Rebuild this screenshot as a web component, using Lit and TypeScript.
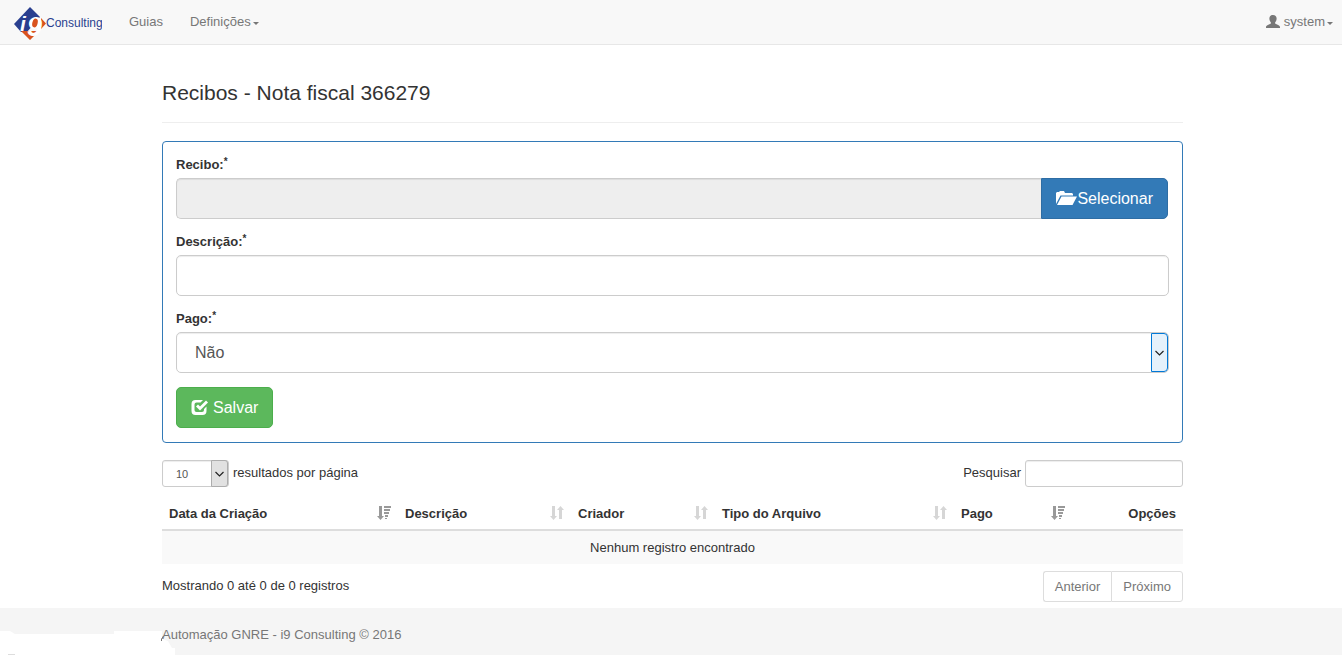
import { LitElement, html, css, svg } from "lit";
import { customElement, state } from "lit/decorators.js";

type SortMode = "none" | "desc" | "off";

interface Column {
  label: string;
  sort: SortMode;
  cls: string;
}

const COLUMNS: Column[] = [
  { label: "Data da Criação", sort: "desc", cls: "c-data" },
  { label: "Descrição", sort: "none", cls: "c-desc" },
  { label: "Criador", sort: "none", cls: "c-criador" },
  { label: "Tipo do Arquivo", sort: "none", cls: "c-tipo" },
  { label: "Pago", sort: "desc", cls: "c-pago" },
  { label: "Opções", sort: "off", cls: "c-opcoes" },
];

const sortIcon = (mode: SortMode) =>
  mode === "desc"
    ? html`<svg class="sort active" viewBox="0 0 14 14" aria-hidden="true">
        ${svg`<path d="M2 0h3v10h2l-3.500 4L0 10h2z M7 0h7v2H7z M7 3h6v2H7z M7 6h5v2H7z M8 9h3v2H8z M8 12h2v1H8z" />`}
      </svg>`
    : html`<svg class="sort" viewBox="0 0 14 14" aria-hidden="true">
        ${svg`<path d="M2 0h3v10h2l-3.500 4L0 10h2z M9 13h3V4h2l-3.500-4L7 4h2z" />`}
      </svg>`;

@customElement("app-root")
export class AppRoot extends LitElement {
  static styles = css`
    :host {
      display: flex;
      flex-direction: column;
      min-height: 100vh;
      position: relative;
      background: #fff;
      color: #333;
      font: 13px/18px "Liberation Sans", Arial, sans-serif;
    }
    * {
      box-sizing: border-box;
    }
    button,
    input,
    select {
      font-family: inherit;
      margin: 0;
    }
    a {
      color: #777;
      text-decoration: none;
    }
    .navbar {
      display: flex;
      align-items: center;
      height: 45px;
      padding: 0 9px 0 13px;
      background: #f8f8f8;
      border-bottom: 1px solid #e7e7e7;
    }
    .brand {
      display: flex;
      margin-right: 27px;
      padding-top: 3px;
    }
    .brand svg {
      width: 89px;
      height: 34px;
    }
    .brand .word {
      font: 12px "Liberation Sans", Arial, sans-serif;
    }
    .brand .nine {
      font: italic bold 27px "Liberation Sans", Arial, sans-serif;
    }
    .brand .letter {
      font: italic bold 21px "Liberation Sans", Arial, sans-serif;
    }
    .nav {
      display: flex;
      flex: 1;
      gap: 27px;
    }
    .menu {
      display: flex;
      align-items: center;
    }
    .caret {
      margin: 2px 0 0 2px;
      border-top: 3px solid #777;
      border-left: 3px solid transparent;
      border-right: 3px solid transparent;
    }
    .user {
      width: 14px;
      height: 13px;
      margin: 0 4px 2px 0;
      fill: #777;
    }
    .container {
      width: 100%;
      max-width: 1024px;
      margin: 0 auto;
      padding-left: 3px;
    }
    main.container {
      padding-top: 35px;
      padding-bottom: 6px;
    }
    h1 {
      margin: 0 0 18px;
      padding-bottom: 16px;
      border-bottom: 1px solid #eee;
      font-size: 21px;
      line-height: 26px;
      font-weight: 400;
    }
    .panel {
      padding: 14px 13px;
      border: 1px solid #337ab7;
      border-radius: 4px;
      margin-bottom: 17px;
    }
    .group {
      margin-bottom: 14px;
    }
    .group label {
      display: block;
      height: 17px;
      margin-bottom: 5px;
      font-weight: 700;
    }
    .req {
      font-size: 10px;
      line-height: 0;
      vertical-align: 4px;
      color: #333;
    }
    .field {
      display: block;
      width: 100%;
      height: 41px;
      padding: 0 15px;
      border: 1px solid #ccc;
      border-radius: 5px;
      background: #fff;
      box-shadow: inset 0 1px 1px rgba(0, 0, 0, 0.075);
      color: #555;
      font-size: 16px;
    }
    .file {
      display: flex;
      padding-right: 1px;
    }
    .file .field {
      flex: 1;
      min-width: 0;
      border-right: 0;
      border-radius: 5px 0 0 5px;
      background: #eee;
    }
    .btn {
      display: inline-flex;
      align-items: center;
      height: 41px;
      padding: 0 14px;
      border: 1px solid;
      border-radius: 5px;
      color: #fff;
      font-size: 16px;
      line-height: 22px;
    }
    .btn svg {
      margin-bottom: 2px;
      fill: #fff;
    }
    .primary {
      background: #337ab7;
      border-color: #2e6da4;
      border-radius: 0 5px 5px 0;
    }
    .primary svg {
      width: 21px;
      height: 16px;
    }
    .success {
      display: flex;
      background: #5cb85c;
      border-color: #4cae4c;
      gap: 4px;
    }
    .success svg {
      width: 18px;
      height: 16px;
    }
    .select {
      display: grid;
    }
    .select > * {
      grid-area: 1 / 1;
    }
    .select select {
      appearance: none;
      padding-left: 18px;
    }
    .drop {
      justify-self: end;
      display: grid;
      place-items: center;
      width: 17px;
      margin: 1px 1px 1px 0;
      border: 1px solid #0078d7;
      border-radius: 0 4px 4px 0;
      background: #e5f1fb;
      pointer-events: none;
    }
    .drop svg {
      width: 9px;
      height: 6px;
      fill: none;
      stroke: #222;
      stroke-width: 1.2;
    }
    .small .field {
      width: 67px;
      height: 27px;
      padding-left: 13px;
      border-radius: 3px;
      font-size: 11px;
    }
    .small .drop {
      margin: 0 1px 0 0;
      border-color: #adadad;
      border-radius: 0 3px 3px 0;
      background: #e1e1e1;
    }
    .row {
      display: flex;
      justify-content: space-between;
      align-items: center;
    }
    .tool {
      display: flex;
      align-items: center;
      gap: 4px;
    }
    .tool label {
      padding-bottom: 2px;
    }
    .search {
      width: 158px;
      height: 27px;
      padding: 0 9px;
      border-radius: 3px;
      font-size: 12px;
    }
    table {
      width: 100%;
      margin: 7px 0;
      border-collapse: collapse;
      table-layout: fixed;
    }
    th {
      height: 36px;
      padding: 5px 7px 0;
      border-bottom: 2px solid #ddd;
      text-align: left;
    }
    th div {
      display: flex;
      align-items: center;
      justify-content: space-between;
    }
    .c-data {
      width: 236px;
    }
    .c-desc {
      width: 173px;
    }
    .c-criador {
      width: 144px;
    }
    .c-tipo {
      width: 239px;
    }
    .c-pago {
      width: 118px;
    }
    .c-opcoes div {
      justify-content: flex-end;
    }
    .sort {
      width: 14px;
      height: 14px;
      margin-top: -2px;
      fill: #d6d6d6;
    }
    .sort.active {
      fill: #999;
    }
    td {
      height: 34px;
      padding: 0;
      background: #f9f9f9;
      text-align: center;
    }
    .pager {
      display: flex;
    }
    .pager button {
      height: 31px;
      padding: 0 11px;
      border: 1px solid #ddd;
      border-radius: 0 3px 3px 0;
      background: #fff;
      color: #777;
      font-size: 13px;
    }
    .pager button:first-child {
      border-right: 0;
      border-radius: 3px 0 0 3px;
    }
    .info {
      padding-bottom: 2px;
    }
    footer {
      flex: 1;
      padding-top: 18px;
      background: #f5f5f5;
      color: #777;
    }
    .patch {
      position: absolute;
      left: 0;
      bottom: 0;
      width: 176px;
      height: 24px;
    }
  `;

  @state() private columns = COLUMNS;

  render() {
    return html`
      <nav class="navbar">
        <a class="brand" href="#" aria-label="i9 Consulting">
          <svg viewBox="0 0 89 34" aria-hidden="true">
            <path fill="#2a3f8f" d="M17 0L27 10 14 25H8L1 17z" />
            <path fill="#d9531e" d="M8 24h18l-9 9z M28 11l5 5.500-5 5.500z" />
            <text class="letter" x="7" y="24" fill="#fff">i</text>
            <text class="nine" x="14" y="29" fill="#fff">9</text>
            <ellipse cx="22" cy="16" rx="2.600" ry="4.500" fill="#d9531e" transform="rotate(15 22 16)" />
            <text class="word" x="33" y="20" fill="#2a3f8f">Consulting</text>
          </svg>
        </a>
        <div class="nav">
          <a href="#">Guias</a>
          <a class="menu" href="#">Definições<span class="caret"></span></a>
        </div>
        <a class="menu" href="#">
          <svg class="user" viewBox="0 0 14 13" aria-hidden="true">
            <path d="M7 0c2.400 0 3.800 1.500 3.600 4-.1 1.600-.8 2.600-1.500 3.400v1c.8.9 4.700 1.300 4.900 3.600v1H0v-1c.2-2.300 4.100-2.700 4.900-3.600v-1C4.200 6.600 3.500 5.600 3.400 4 3.200 1.500 4.600 0 7 0z" />
          </svg>
          system<span class="caret"></span>
        </a>
      </nav>
      <main class="container">
        <h1>Recibos - Nota fiscal 366279</h1>
        <form class="panel" @submit=${(e: Event) => e.preventDefault()}>
          <div class="group">
            <label for="recibo">Recibo:<span class="req">*</span></label>
            <div class="file">
              <input class="field" id="recibo" type="text" readonly />
              <button class="btn primary" type="button">
                <svg viewBox="0 0 21 16" aria-hidden="true">
                  <path d="M0 14V3l1-1h2l1-1h4l1 2h7l1 1v1.500H4.500L0 14z M5.500 6.500H21L16.500 15H1z" />
                </svg>Selecionar
              </button>
            </div>
          </div>
          <div class="group">
            <label for="descricao">Descrição:<span class="req">*</span></label>
            <input class="field" id="descricao" type="text" />
          </div>
          <div class="group">
            <label for="pago">Pago:<span class="req">*</span></label>
            <div class="select">
              <select class="field" id="pago">
                <option>Não</option>
                <option>Sim</option>
              </select>
              <span class="drop"><svg viewBox="0 0 9 6"><path d="M.5 1l4 4 4-4" /></svg></span>
            </div>
          </div>
          <button class="btn success" type="submit">
            <svg viewBox="0 0 17 16" aria-hidden="true">
              <path d="M4 1h7.500L9 3.500H5Q3 3.500 3 5.500v5.500q0 2 2 2h5.500q2 0 2-2v-1L15 7.500V12q0 4-4 4H4q-4 0-4-4V5q0-4 4-4z M4.500 7.500l2-2 2 2L14.500 1.500l2 2-8 8z" />
            </svg>
            Salvar
          </button>
        </form>
        <div class="row">
          <div class="tool">
            <div class="select small">
              <select class="field" id="tamanho">
                <option>10</option>
                <option>25</option>
                <option>50</option>
              </select>
              <span class="drop"><svg viewBox="0 0 9 6"><path d="M.5 1l4 4 4-4" /></svg></span>
            </div>
            <label for="tamanho">resultados por página</label>
          </div>
          <div class="tool">
            <label for="pesquisar">Pesquisar</label>
            <input class="field search" id="pesquisar" type="search" />
          </div>
        </div>
        <table>
          <thead>
            <tr>
              ${this.columns.map(
                (c) => html`<th class=${c.cls} scope="col">
                  <div>${c.label}${c.sort === "off" ? "" : sortIcon(c.sort)}</div>
                </th>`
              )}
            </tr>
          </thead>
          <tbody>
            <tr>
              <td colspan="6">Nenhum registro encontrado</td>
            </tr>
          </tbody>
        </table>
        <div class="row">
          <div class="info">Mostrando 0 até 0 de 0 registros</div>
          <div class="pager">
            <button type="button">Anterior</button>
            <button type="button">Próximo</button>
          </div>
        </div>
      </main>
      <footer><div class="container">Automação GNRE - i9 Consulting © 2016</div></footer>
      <svg class="patch" viewBox="0 0 176 24" aria-hidden="true">
        <path fill="#fff" d="M0 0h10l5 3h99V0h48v8l6 2 4 7h3v7H0z" />
        <path fill="#ddd" d="M8 23h7v1H8z" />
        <path fill="none" stroke="#777" d="M161.500 10v-2l2-3" />
      </svg>
    `;
  }
}
